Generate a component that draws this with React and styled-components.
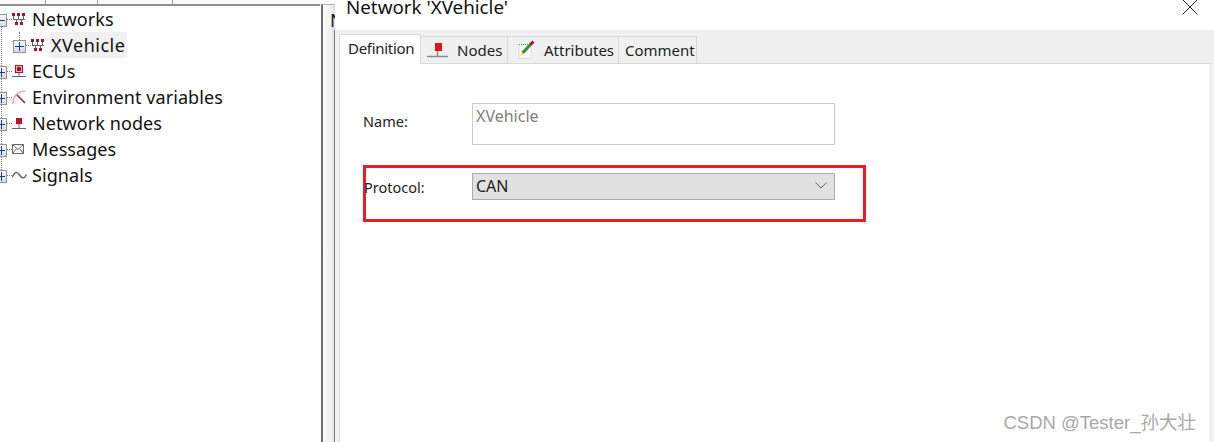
import React from 'react'
import styled, { createGlobalStyle } from 'styled-components'

const tree = [
  { label: 'Networks', icon: 'network', open: true },
  { label: 'XVehicle', icon: 'network', child: true, selected: true },
  { label: 'ECUs', icon: 'ecu' },
  { label: 'Environment variables', icon: 'gauge' },
  { label: 'Network nodes', icon: 'node' },
  { label: 'Messages', icon: 'mail' },
  { label: 'Signals', icon: 'wave' },
]

const NetworkIcon = () => (
  <svg width="14" height="13" viewBox="0 0 14 13">
    <path d="M1 6.500h12M1.500 3v3.500M6.500 3v3.500M11.500 3v3.500M4.500 6.500v3M9.500 6.500v3" stroke="#666" fill="none" />
    <path d="M0 0h3v3H0zM5 0h3v3H5zM10 0h3v3h-3zM3 9h3v3H3zM8 9h3v3H8z" fill="#a0122e" />
  </svg>
)

const EcuIcon = () => (
  <svg width="15" height="14" viewBox="0 0 15 14">
    <path d="M0 12.500h14M7 9v3" stroke="#666" fill="none" />
    <rect x="3.500" y="1.500" width="7" height="7" fill="#e6b8c0" stroke="#a0122e" />
    <rect x="5" y="3" width="4" height="4" fill="#a0122e" />
  </svg>
)

const GaugeIcon = () => (
  <svg width="15" height="15" viewBox="0 0 15 15">
    <path d="M1 14C1 7 5 1.500 13 1" stroke="#c4b4b8" strokeWidth="1.500" fill="none" />
    <path d="M3.500 14C3.500 9 7 4 12 3.500" stroke="#e4e4e4" fill="none" />
    <path d="M5 5l8 8" stroke="#a0122e" strokeWidth="1.500" fill="none" />
  </svg>
)

const NodeIcon = () => (
  <svg width="15" height="14" viewBox="0 0 15 14">
    <path d="M0 12.500h14M7 8v4" stroke="#666" fill="none" />
    <rect x="4" y="2" width="6" height="6" fill="#b8102e" />
  </svg>
)

const MailIcon = () => (
  <svg width="13" height="11" viewBox="0 0 13 11">
    <path d="M0.500 0.500h11v9h-11zM0.500 0.500l5.500 5 5.500-5M0.500 9.500l4-5M11.500 9.500l-4-5" stroke="#666" fill="#fff" />
  </svg>
)

const WaveIcon = () => (
  <svg width="15" height="9" viewBox="0 0 15 9">
    <path d="M0.500 6C3 0 5 0.500 7.500 4S12 8.500 14.500 3.500" stroke="#555" strokeWidth="1.300" fill="none" />
  </svg>
)

const treeIcons = {
  network: NetworkIcon,
  ecu: EcuIcon,
  gauge: GaugeIcon,
  node: NodeIcon,
  mail: MailIcon,
  wave: WaveIcon,
}

const TabNodeIcon = () => (
  <svg width="22" height="16" viewBox="0 0 22 16">
    <path d="M0 14.500h21M10.500 9v5" stroke="#8a8a8a" strokeWidth="1.500" fill="none" />
    <rect x="8" y="1" width="7" height="8" fill="#e8101c" />
  </svg>
)

const TabPencilIcon = () => (
  <svg width="18" height="20" viewBox="0 0 18 20">
    <path d="M1 4.500h12v14H1z" fill="#f8f8f8" stroke="#ddd" />
    <path d="M1 4.500h10" stroke="#777" strokeDasharray="1 1" fill="none" />
    <path d="M4.500 13L13 4" stroke="#2f8f2f" strokeWidth="3" fill="none" />
    <path d="M12.500 4.500l3-3" stroke="#a0122e" strokeWidth="3" fill="none" />
    <path d="M2.500 16l1.500-4 2 2z" fill="#f0e020" />
  </svg>
)

const Chevron = () => (
  <svg width="12" height="7" viewBox="0 0 12 7">
    <path d="M0.500 0.500L6 6l5.500-5.500" stroke="#666" fill="none" />
  </svg>
)

const CloseIcon = () => (
  <svg width="16" height="16" viewBox="0 0 16 16">
    <path d="M0.500 0.500l15 15M15.500 0.500l-15 15" stroke="#222" fill="none" />
  </svg>
)

const App = () => {
  return (
    <>
      <GlobalStyle />
      <Page>
        <TreePanel>
          <Ruler>
            <RulerCell $w={46} />
            <RulerCell $w={52} />
            <RulerCell $w={75} />
          </Ruler>
          <TreeList>
            {tree.map((item) => {
              const Icon = treeIcons[item.icon]
              return (
                <TreeRow key={item.label} $child={item.child}>
                  <Expander $child={item.child}>
                    <ExpanderBar $child={item.child} />
                    {!item.open && <ExpanderBar $child={item.child} $vertical />}
                  </Expander>
                  <Dots />
                  <IconSlot><Icon /></IconSlot>
                  <TreeLabel $selected={item.selected}>{item.label}</TreeLabel>
                </TreeRow>
              )
            })}
          </TreeList>
        </TreePanel>
        <Splitter>
          <SplitterTab>N</SplitterTab>
        </Splitter>
        <Dialog>
          <TitleBar>
            <Title>Network 'XVehicle'</Title>
            <CloseButton><CloseIcon /></CloseButton>
          </TitleBar>
          <DialogMain>
            <TabStrip>
              <Tab $active $w={82} $pl={8}>Definition</Tab>
              <Tab $w={88} $pl={6}><TabNodeIcon />Nodes</Tab>
              <Tab $w={112} $pl={10}><TabPencilIcon />Attributes</Tab>
              <Tab $w={79} $pl={6}>Comment</Tab>
            </TabStrip>
            <TabBody>
              <NameRow>
                <NameLabel>Name:</NameLabel>
                <NameInput>XVehicle</NameInput>
              </NameRow>
              <ProtocolBox>
                <ProtocolLabel>Protocol:</ProtocolLabel>
                <Select>
                  CAN
                  <Chevron />
                </Select>
              </ProtocolBox>
              <Watermark>CSDN @Tester_孙大壮</Watermark>
            </TabBody>
          </DialogMain>
        </Dialog>
      </Page>
    </>
  )
}

export default App

const GlobalStyle = createGlobalStyle`
  html, body {
    margin: 0;
    height: 100%;
    overflow: hidden;
    background: #fff;
    font-family: "Liberation Sans", Arial, sans-serif;
  }
`

const Page = styled.div`
  display: flex;
  width: 1214px;
  height: 442px;
  overflow: hidden;
`

const TreePanel = styled.div`
  width: 320px;
  flex-shrink: 0;
  display: flex;
  flex-direction: column;
  background: #fff;
`

const Ruler = styled.div`
  display: flex;
  height: 4px;
  border-bottom: 2px solid #8f8f8f;
  background: #fafafa;
`

const RulerCell = styled.div`
  width: ${(p) => p.$w}px;
  border-right: 1px solid #a0a0a0;
  box-sizing: border-box;
`

const TreeList = styled.div`
  position: relative;
  display: flex;
  flex-direction: column;

  &::before {
    content: '';
    position: absolute;
    left: 1px;
    top: 20px;
    height: 150px;
    border-left: 1px dotted #777;
  }
`

const TreeRow = styled.div`
  display: flex;
  align-items: center;
  height: 26px;
  padding-left: ${(p) => (p.$child ? 13 : 0)}px;
`

const Expander = styled.div`
  position: relative;
  box-sizing: border-box;
  width: ${(p) => (p.$child ? 13 : 7)}px;
  height: 13px;
  flex-shrink: 0;
  margin-top: 2px;
  background: linear-gradient(#f6f6f6, #d9dbe2);
  border: 1px solid #8d9298;
  border-left: ${(p) => (p.$child ? '1px solid #8d9298' : 'none')};

  &::before {
    content: ${(p) => (p.$child ? "''" : 'none')};
    position: absolute;
    left: 5px;
    top: -9px;
    height: 8px;
    border-left: 1px dotted #777;
  }
`

const ExpanderBar = styled.span`
  position: absolute;
  background: #1f3f7a;
  ${(p) => {
    if (p.$vertical) {
      return `left: ${p.$child ? 5 : 1}px; top: 1px; width: 1px; height: 9px;`
    }
    return `left: ${p.$child ? 1 : 0}px; right: 1px; top: 5px; height: 1px;`
  }}
`

const Dots = styled.span`
  width: 5px;
  border-top: 1px dotted #777;
  flex-shrink: 0;
`

const IconSlot = styled.span`
  width: 18px;
  height: 16px;
  display: flex;
  align-items: center;
  flex-shrink: 0;
`

const TreeLabel = styled.span`
  font-family: "Noto Sans", "Open Sans", sans-serif;
  font-size: 18px;
  line-height: 26px;
  letter-spacing: ${(p) => (p.$selected ? 0.5 : 0.08)}px;
  color: #111;
  padding: 0 2px;
  background: ${(p) => (p.$selected ? '#f0f0f0' : 'transparent')};
`

const Splitter = styled.div`
  width: 15px;
  flex-shrink: 0;
  display: flex;
  padding-left: 1px;
  box-sizing: border-box;
`

const SplitterTab = styled.div`
  margin-top: 4px;
  flex: 1;
  border-left: 2px solid #6f6f6f;
  border-top: 1px solid #b5b5b5;
  background: linear-gradient(to right, #fbfbfb, #f0f0f0 70%, #d8d8d8);
  font-family: "Noto Sans", sans-serif;
  font-size: 18px;
  line-height: 24px;
  padding: 3px 0 0 7px;
  overflow: hidden;
  color: #111;
`

const Dialog = styled.div`
  flex: 1;
  display: flex;
  flex-direction: column;
  background: #fff;
`

const TitleBar = styled.div`
  height: 30px;
  flex-shrink: 0;
  display: flex;
  justify-content: space-between;
  padding: 0 16px 0 11px;
  overflow: hidden;
`

const Title = styled.div`
  font-family: "Noto Sans", sans-serif;
  font-size: 18.800px;
  line-height: 14px;
  color: #111;
`

const CloseButton = styled.div`
  margin-top: -1px;
`

const DialogMain = styled.div`
  flex: 1;
  display: flex;
  flex-direction: column;
  margin-left: -1px;
  border-left: 1px solid #7d7d7d;
  background: #f0f0f0;
`

const TabStrip = styled.div`
  height: 33px;
  flex-shrink: 0;
  display: flex;
  align-items: flex-end;
  padding-left: 4px;
  position: relative;
  z-index: 1;
`

const Tab = styled.div`
  display: flex;
  align-items: center;
  gap: 8px;
  box-sizing: border-box;
  width: ${(p) => p.$w}px;
  height: ${(p) => (p.$active ? 30 : 27)}px;
  margin-bottom: ${(p) => (p.$active ? -1 : 0)}px;
  margin-left: ${(p) => (p.$active ? 0 : -1)}px;
  padding: 0 0 ${(p) => (p.$active ? 3 : 0)}px ${(p) => p.$pl}px;
  font-family: "Noto Sans", sans-serif;
  font-size: 15px;
  letter-spacing: ${(p) => (p.$active ? -0.3 : 0)}px;
  color: #222;
  background: ${(p) => (p.$active ? '#fff' : '#f0f0f0')};
  border: 1px solid #d9d9d9;
  border-bottom: none;
  white-space: nowrap;
`

const TabBody = styled.div`
  flex: 1;
  position: relative;
  display: flex;
  flex-direction: column;
  margin-left: 4px;
  padding: 39px 0 0 23px;
  background: #fff;
  border-top: 1px solid #d9d9d9;
  border-left: 1px solid #d9d9d9;
  border-right: 5px solid #f0f0f0;
`

const NameRow = styled.div`
  display: flex;
  align-items: center;
  height: 42px;
`

const FieldLabel = styled.div`
  font-family: "Noto Sans", sans-serif;
  font-size: 14.500px;
  color: #222;
`

const NameLabel = styled(FieldLabel)`
  width: 109px;
  padding-bottom: 6px;
`

const NameInput = styled.div`
  width: 363px;
  height: 42px;
  box-sizing: border-box;
  padding: 3px 3px;
  border: 1px solid #ccc;
  font-family: "Noto Sans", sans-serif;
  font-size: 16px;
  line-height: 18px;
  color: #808080;
`

const ProtocolBox = styled.div`
  width: 503px;
  height: 57px;
  box-sizing: border-box;
  margin-top: 20px;
  padding-top: 5px;
  display: flex;
  align-items: flex-start;
  border: 3px solid #ed1c24;
`

const ProtocolLabel = styled(FieldLabel)`
  width: 108px;
  margin-left: -2px;
  line-height: 28px;
`

const Select = styled.div`
  width: 363px;
  height: 27px;
  box-sizing: border-box;
  display: flex;
  align-items: center;
  justify-content: space-between;
  padding: 0 7px 2px 3px;
  background: #e1e1e1;
  border: 1px solid #adadad;
  font-family: "Noto Sans", sans-serif;
  font-size: 16px;
  color: #222;
`

const Watermark = styled.div`
  position: absolute;
  right: 13px;
  bottom: 8px;
  font-family: "Liberation Sans", "Noto Sans CJK SC", sans-serif;
  font-size: 18.500px;
  color: #a8a8a8;
  white-space: nowrap;
`
